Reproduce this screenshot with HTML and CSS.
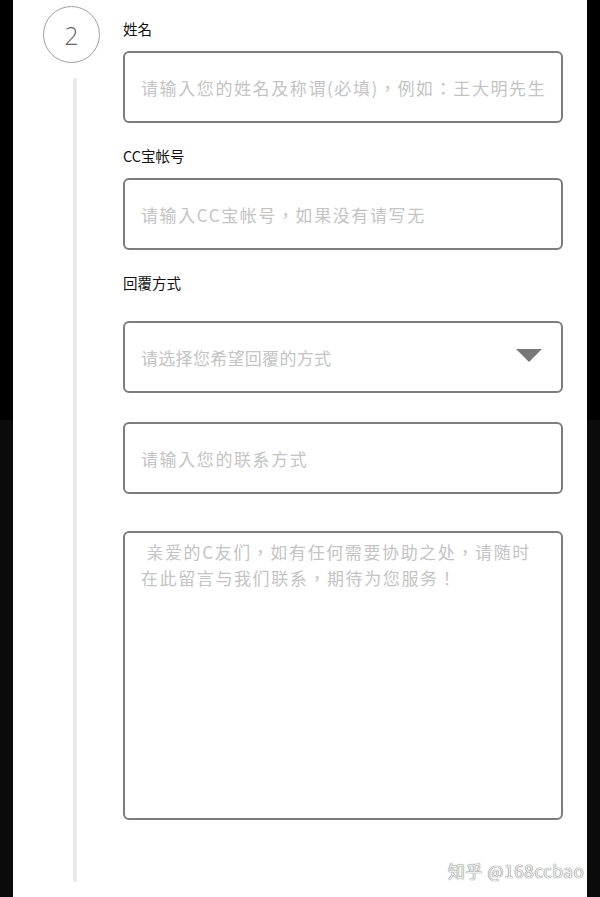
FILE: index.html
```html
<!DOCTYPE html>
<html lang="zh-CN">
<head>
  <meta charset="UTF-8" />
  <title>联系我们</title>
  <meta name="viewport" content="width=device-width, initial-scale=1.0" />
  <link rel="stylesheet" href="styles.css">
</head>
<body>
  <div class="page">
    <div class="step">
      <div class="step-num">2</div>
      <div class="step-line"></div>
    </div>

    <form class="contact-form" lang="zh-TW">
      <label class="field-label label-name" for="name">姓名</label>
      <input class="field" type="text" id="name" placeholder="请输入您的姓名及称谓(必填)，例如：王大明先生" />

      <label class="field-label" for="account">CC宝帐号</label>
      <input class="field" type="text" id="account" placeholder="请输入CC宝帐号，如果没有请写无" />

      <label class="field-label label-reply" for="reply">回覆方式</label>
      <div class="select-wrap">
        <select class="field select" id="reply">
          <option value="">请选择您希望回覆的方式</option>
        </select>
        <span class="arrow"></span>
      </div>

      <input class="field contact" type="text" placeholder="请输入您的联系方式" />

      <textarea class="field message" placeholder=" 亲爱的C友们，如有任何需要协助之处，请随时&#10;在此留言与我们联系，期待为您服务！"></textarea>
    </form>
  </div>

  <div class="watermark">知乎 @168ccbao</div>
</body>
</html>
```

FILE: styles.css
```css
* {
  box-sizing: border-box;
}

html, body {
  height: 100%;
}

body {
  margin: 0;
  background: linear-gradient(#000 0, #000 420px, #0b0b0b 420px);
  font-family: "Noto Sans CJK SC", "Noto Sans", sans-serif;
  overflow: hidden;
}

.page {
  display: flex;
  margin: 0 13px;
  height: 897px;
  background: #fff;
}

/* step indicator */
.step {
  width: 110px;
  display: flex;
  flex-direction: column;
  padding: 6px 0 15px 30px;
}

.step-num {
  width: 57px;
  height: 57px;
  border: 1px solid #a0a0a0;
  border-radius: 50%;
  display: flex;
  align-items: center;
  justify-content: center;
  font-family: "Open Sans", sans-serif;
  font-weight: 300;
  font-size: 25px;
  color: #666;
}

.step-line {
  flex: 1;
  width: 4px;
  margin: 15px 0 0 30px;
  background: #ebebeb;
}

/* form */
.contact-form {
  width: 440px;
  display: flex;
  flex-direction: column;
  padding-top: 19px;
}

.field-label {
  font-family: "Noto Sans CJK SC", sans-serif;
  font-size: 14.5px;
  line-height: 20px;
  color: #111;
  margin: 23px 0 12px;
}

.label-name {
  margin-top: 0;
}

.label-reply {
  margin-bottom: 28px;
}

.field {
  width: 100%;
  height: 72px;
  border: 2px solid #7d7d7d;
  border-radius: 6px;
  background: #fff;
  padding: 0 16px;
  font-family: "Noto Sans CJK TC", "Noto Sans", sans-serif;
  font-size: 17px;
  letter-spacing: 1.6px;
  color: #333;
  outline: none;
}

.field::placeholder {
  color: #c4c4c4;
}

.select-wrap {
  position: relative;
}

.select {
  appearance: none;
  -webkit-appearance: none;
  color: #c4c4c4;
  letter-spacing: 0.3px;
}

.arrow {
  position: absolute;
  right: 21px;
  top: 28px;
  width: 0;
  height: 0;
  border-left: 13px solid transparent;
  border-right: 13px solid transparent;
  border-top: 13px solid #777;
}

.contact {
  margin-top: 29px;
}

.message {
  margin-top: 37px;
  height: 289px;
  padding: 6px 16px;
  line-height: 26px;
  resize: none;
}

.watermark {
  position: absolute;
  left: 448px;
  top: 858px;
  font-size: 17px;
  color: #eee;
  text-shadow: 0 0 1px #777, 0 0 1px #777;
  letter-spacing: 0.6px;
}
```
